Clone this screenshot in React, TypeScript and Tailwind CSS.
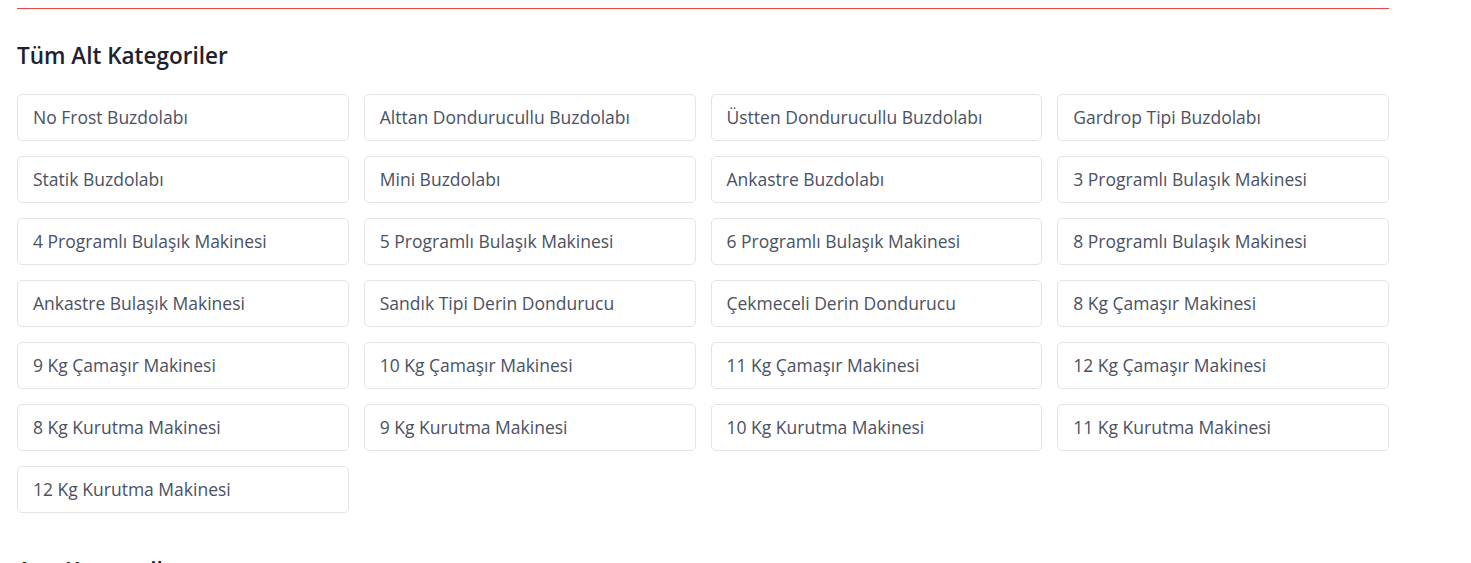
const subCategories = [
  'No Frost Buzdolabı',
  'Alttan Dondurucullu Buzdolabı',
  'Üstten Dondurucullu Buzdolabı',
  'Gardrop Tipi Buzdolabı',
  'Statik Buzdolabı',
  'Mini Buzdolabı',
  'Ankastre Buzdolabı',
  '3 Programlı Bulaşık Makinesi',
  '4 Programlı Bulaşık Makinesi',
  '5 Programlı Bulaşık Makinesi',
  '6 Programlı Bulaşık Makinesi',
  '8 Programlı Bulaşık Makinesi',
  'Ankastre Bulaşık Makinesi',
  'Sandık Tipi Derin Dondurucu',
  'Çekmeceli Derin Dondurucu',
  '8 Kg Çamaşır Makinesi',
  '9 Kg Çamaşır Makinesi',
  '10 Kg Çamaşır Makinesi',
  '11 Kg Çamaşır Makinesi',
  '12 Kg Çamaşır Makinesi',
  '8 Kg Kurutma Makinesi',
  '9 Kg Kurutma Makinesi',
  '10 Kg Kurutma Makinesi',
  '11 Kg Kurutma Makinesi',
  '12 Kg Kurutma Makinesi',
]

export default function App() {
  return (
    <div className="min-h-screen bg-white font-['Open_Sans',sans-serif]">
      <div className="ml-[17px] w-[1372px] pt-[8px]">
        <div className="h-px bg-[#ef4444]" />

        {/* Sub categories */}
        <section className="pt-[32px]">
          <h2 className="text-[22.5px] leading-[30px] font-semibold text-[#1c2230]">Tüm Alt Kategoriler</h2>
          <div className="mt-[23px] grid grid-cols-4 gap-[15px]">
            {subCategories.map((name) => (
              <a
                key={name}
                href="#"
                className="h-[47px] flex items-center px-[15px] border border-[#e3e4e8] rounded-[5px] text-[17.5px] text-[#4a5162] hover:border-[#ef4444] transition-colors"
              >
                {name}
              </a>
            ))}
          </div>
        </section>

        {/* Main categories */}
        <section className="pt-[43px]">
          <h2 className="text-[22.5px] leading-[30px] font-semibold text-[#1c2230]">Ana Kategoriler</h2>
        </section>
      </div>
    </div>
  )
}
